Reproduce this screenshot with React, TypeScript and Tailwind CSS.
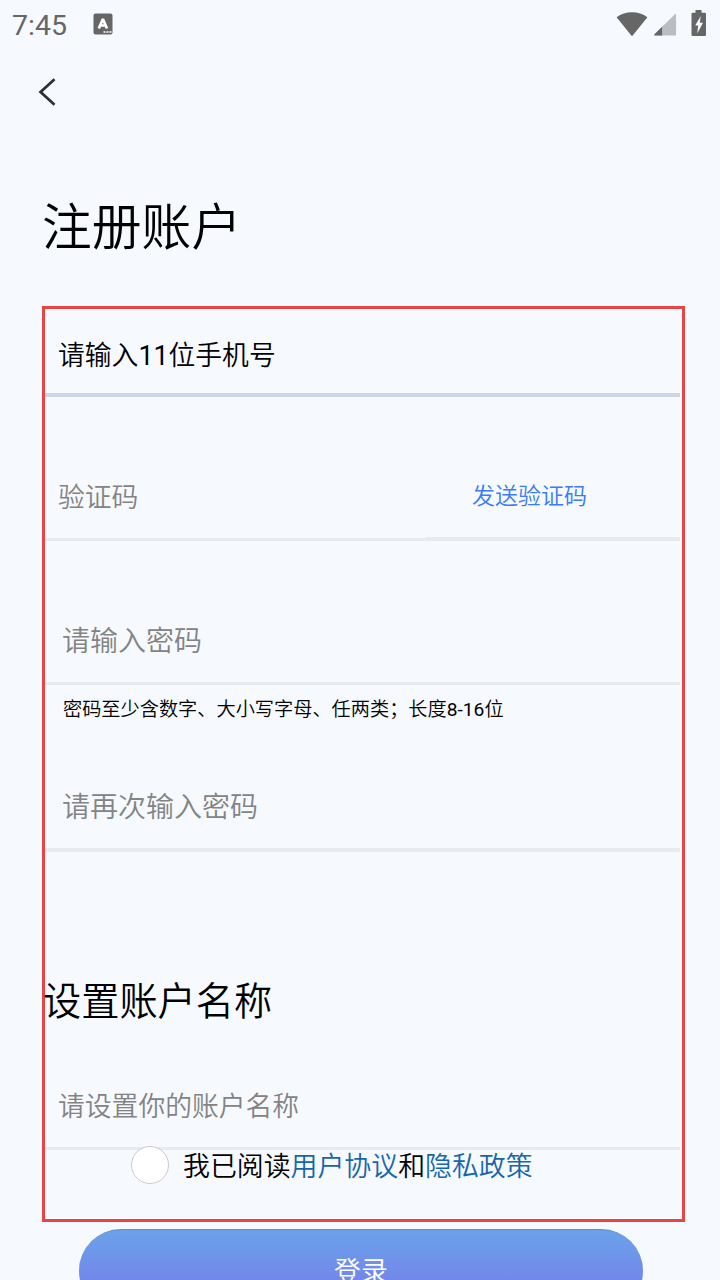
import type { ReactNode } from "react"
import clsx from "clsx"

function StatusBar() {
  return (
    <header className="flex h-[50px] items-center pl-3 pr-[13px] text-[#666666]">
      <span className="w-[81px] pt-0.5 text-[28.5px] font-normal leading-[50px]">7:45</span>
      <svg className="-mt-0.5" width="20" height="22" viewBox="0 0 20 22">
        <rect x="0.5" y="0.5" width="19" height="21" rx="2" fill="#666666" />
        <path d="M5.800 15.500 9.900 6 14 15.500M7.400 12.500h5" fill="none" stroke="#fff" strokeWidth="2.7" strokeLinejoin="bevel" />
        <path d="M10.5 19h2M13.5 19h2M16.5 19h2" stroke="#fff" strokeWidth="1.6" />
      </svg>
      <div className="-mt-1 ml-auto flex items-center">
        <svg className="mt-px" width="32" height="26" viewBox="0 0 32 26">
          <path d="M0.6 6.3C9.2-.3 22.8-.3 31.4 6.3L16.9 24.2q-.9 1-1.8 0Z" fill="#666666" />
        </svg>
        <svg className="ml-[6px] mt-0.5" width="23" height="24" viewBox="0 0 24 24">
          <path d="M1.5 24Q-.5 24 .8 22.4L22.4 1.3 23 1.8V24Z" fill="#bbbec1" />
          <path d="M1.5 24Q-.5 24 .8 22.4L8.5 14.8V24Z" fill="#666666" />
        </svg>
        <svg className="ml-[14px]" width="16" height="28" viewBox="0 0 16 28">
          <path d="M4.5 1h6v2.8h3.2q1.3 0 1.3 1.3v20.6q0 1.3-1.3 1.3H1.8Q.5 27 .5 25.7V5.1q0-1.3 1.3-1.3H4.5Z" fill="#666666" />
          <path d="M9.8 7 4.200 16.500h3L6.200 24.500 12 13.800H8.800Z" fill="#f6f9fe" />
        </svg>
      </div>
    </header>
  )
}

interface FieldProps {
  className: string
  children: ReactNode
}

function Field({ className, children }: FieldProps) {
  return (
    <div className={clsx("flex w-[635px] items-end text-[#838383]", className)}>
      {children}
    </div>
  )
}

function RegisterForm() {
  return (
    <section className="-mt-[5px] ml-[42px] h-[916px] w-[643px] border-3 border-[#e94444]">
      <Field className="h-[88px] border-b-4 border-[#cbd7e6] pb-[17px] pl-[13px] text-[26.8px] leading-10">
        <span className="text-black">
          请输入<span className="font-normal">11</span>位手机号
        </span>
      </Field>

      <div className="flex h-36 w-[635px] items-end">
        <div className="w-[381px] border-b-3 border-[#e7ebee] pb-5 pl-[13px] text-[26.8px] leading-10 text-[#838383]">
          验证码
        </div>
        <button className="flex-1 border-b-4 border-[#e7ebee] pb-5 pl-[46px] text-left text-[23px] leading-10 text-[#3a7bf6]">
          发送验证码
        </button>
      </div>

      <Field className="h-36 border-b-3 border-[#e7ebee] pb-5 pl-[17px] text-[28px] leading-10">
        请输入密码
      </Field>
      <p className="pl-[18px] pt-[5px] text-[19.2px] leading-10 text-black">
        密码至少含数字、大小写字母、任两类；长度<span className="font-normal">8-16</span>位
      </p>
      <Field className="h-[122px] border-b-4 border-[#e7ebee] pb-5 pl-[17px] text-[28px] leading-10">
        请再次输入密码
      </Field>

      <h2 className="-ml-[2px] mt-[120px] text-[38.2px] font-[350] leading-[60px] text-black">设置账户名称</h2>
      <Field className="h-[118px] border-b-3 border-[#e7ebee] pb-5 pl-[13px] text-[26.8px] leading-10">
        请设置你的账户名称
      </Field>

      <label className="-mt-1 ml-[86px] flex h-[38px] items-center text-[26.9px] text-black">
        <span className="mr-[14px] size-[38px] rounded-full border border-[#cccccc] bg-white" />
        <span className="pt-[5px] leading-[33px]">
          我已阅读<a className="text-[#1765ab]">用户协议</a>和<a className="text-[#1765ab]">隐私政策</a>
        </span>
      </label>
    </section>
  )
}

export default function App() {
  return (
    <main className="h-[1280px] w-[720px] overflow-hidden bg-[#f6f9fe] font-[Roboto,'Noto_Sans_CJK_SC',sans-serif] font-[350]">
      <StatusBar />
      <nav className="h-[84px] pl-[38px] pt-[27px]">
        <svg width="20" height="30" viewBox="0 0 20 30">
          <path d="M16.5 2.2 2.6 15l13.9 12.8" fill="none" stroke="#303030" strokeWidth="2.8" />
        </svg>
      </nav>
      <h1 className="mb-[46px] mt-[52px] pl-[42px] pt-[5px] text-[49.8px] font-[350] leading-[74px] text-black">注册账户</h1>
      <RegisterForm />
      <button className="ml-[79px] mt-[7px] block h-[84px] w-[564px] rounded-full border-t border-[#5b8fc9] bg-linear-to-b from-[#6aa2ea] to-[#7774ec] text-[26.9px] leading-[80px] text-white">
        登录
      </button>
    </main>
  )
}
